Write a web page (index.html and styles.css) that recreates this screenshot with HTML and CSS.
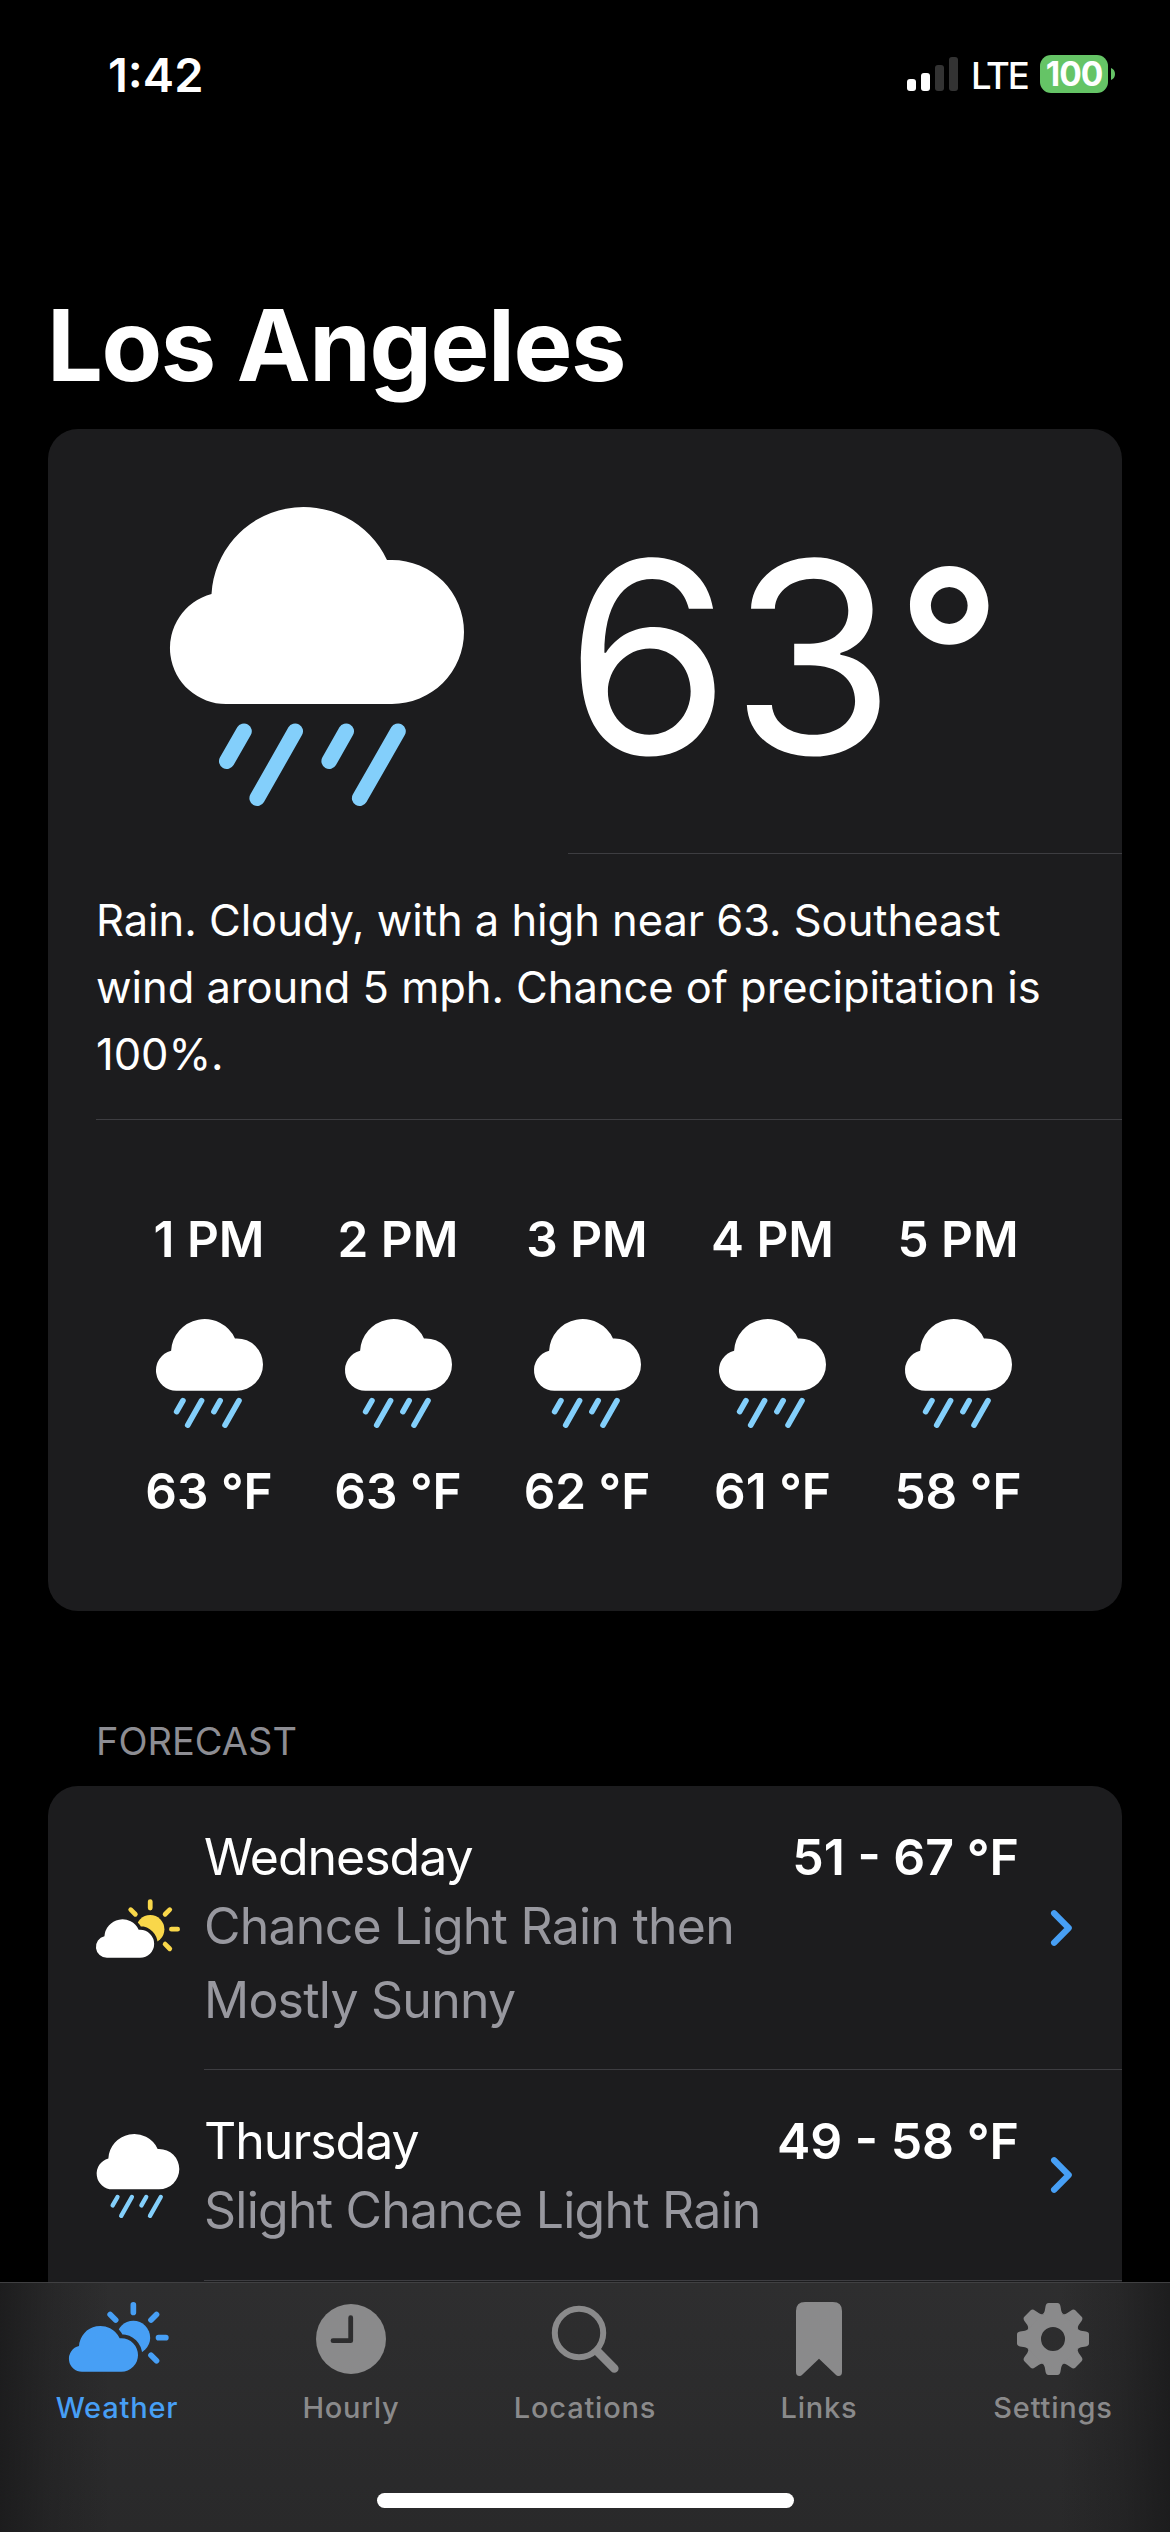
FILE: index.html
```html
<!DOCTYPE html>
<html lang="en">
<head>
<meta charset="utf-8">
<title>Los Angeles</title>
<link rel="stylesheet" href="styles.css">
</head>
<body>
<svg class="sprite" aria-hidden="true">
  <defs>
    <path id="cloud-shape" d="M246 306A39 39 0 0 1 237 229A64 64 0 0 1 359 206H364A50 50 0 0 1 364 306Z"/>
    <mask id="cloud-gap" maskUnits="userSpaceOnUse" x="200" y="90" width="320" height="230">
      <rect x="200" y="90" width="320" height="230" fill="#fff"/>
      <use href="#cloud-shape" fill="#000" stroke="#000" stroke-width="25"/>
    </mask>
    <mask id="clock-hands" maskUnits="userSpaceOnUse" x="0" y="0" width="70" height="70">
      <rect width="70" height="70" fill="#fff"/>
      <path d="M34.7 13.7V36.7H17" fill="none" stroke="#000" stroke-width="4.8" stroke-linecap="round" stroke-linejoin="round"/>
    </mask>
    <path id="tooth" d="M-11 -24.5Q-9 -25 -8.3 -28L-7.4 -33Q-6.8 -36 -4.5 -36H4.5Q6.8 -36 7.4 -33L8.3 -28Q9 -25 11 -24.5Z"/>
  </defs>
  <symbol id="rain" viewBox="170 507 294 299">
    <path fill="#fff" d="M226 704A56 56 0 0 1 211.5 593.9A92.2 92.2 0 0 1 387 560H392A72 72 0 0 1 392 704Z"/>
    <path fill="none" stroke="#83cffb" stroke-width="15.6" stroke-linecap="round" d="M244 731.2L226.8 761.2M295.2 731.2L257.2 798.2M346.2 731.2L329.2 761.2M398 731.2L359.7 798.2"/>
  </symbol>
  <symbol id="cloud-sun" viewBox="207 97 299 209">
    <use class="cloud" href="#cloud-shape"/>
    <circle class="sun" cx="400" cy="204" r="50.5" mask="url(#cloud-gap)"/>
    <path class="rays" d="M400 105.5V128.5M475.5 204H497.5M469.5 134.5L453 151M453 257L469.5 273.5M330.5 134.5L347 151"/>
  </symbol>
</svg>

<div class="screen">
  <main class="content">
    <header class="status">
      <span class="time">1:42</span>
      <div class="indicators">
        <div class="signal"><i class="bar b1"></i><i class="bar b2"></i><i class="bar b3"></i><i class="bar b4"></i></div>
        <span class="network">LTE</span>
        <div class="battery"><span class="level">100</span><svg class="nub" viewBox="0 0 4 12"><path d="M0 0Q4 1.5 4 6T0 12Z" fill="#65c466"/></svg></div>
      </div>
    </header>

    <h1 class="city">Los Angeles</h1>

    <section class="card current">
      <div class="now">
        <svg class="now-icon"><use href="#rain"/></svg>
        <div class="temperature"><span>63</span><span class="degree">°</span></div>
      </div>
      <p class="summary">Rain. Cloudy, with a high near 63. Southeast<br>wind around 5 mph. Chance of precipitation is<br>100%.</p>
      <div class="hours">
        <div class="hour"><span>1 PM</span><svg><use href="#rain"/></svg><span>63 °F</span></div>
        <div class="hour"><span>2 PM</span><svg><use href="#rain"/></svg><span>63 °F</span></div>
        <div class="hour"><span>3 PM</span><svg><use href="#rain"/></svg><span>62 °F</span></div>
        <div class="hour narrow"><span>4 PM</span><svg><use href="#rain"/></svg><span>61 °F</span></div>
        <div class="hour"><span>5 PM</span><svg><use href="#rain"/></svg><span>58 °F</span></div>
      </div>
    </section>

    <h2 class="section-title">FORECAST</h2>

    <section class="card forecast">
      <article class="day">
        <svg class="day-icon partly"><use href="#cloud-sun"/></svg>
        <div class="day-body tall">
          <div class="day-text">
            <div class="day-head"><span class="name">Wednesday</span><span class="range">51 - 67 °F</span></div>
            <p class="detail">Chance Light Rain then Mostly Sunny</p>
          </div>
          <svg class="chevron" viewBox="0 0 21 36"><path d="M3.1 3.3L17.7 18L3.1 32.7"/></svg>
        </div>
      </article>
      <article class="day">
        <svg class="day-icon"><use href="#rain"/></svg>
        <div class="day-body">
          <div class="day-text">
            <div class="day-head"><span class="name">Thursday</span><span class="range">49 - 58 °F</span></div>
            <p class="detail">Slight Chance Light Rain</p>
          </div>
          <svg class="chevron" viewBox="0 0 21 36"><path d="M3.1 3.3L17.7 18L3.1 32.7"/></svg>
        </div>
      </article>
    </section>
  </main>

  <nav class="tabs">
    <div class="tab-row">
      <a class="tab active">
        <span class="tab-icon"><svg class="weather-icon"><use href="#cloud-sun"/></svg></span>
        <span class="label">Weather</span>
      </a>
      <a class="tab">
        <span class="tab-icon"><svg width="70" height="70" viewBox="0 0 70 70"><circle cx="35" cy="35" r="35" mask="url(#clock-hands)"/></svg></span>
        <span class="label">Hourly</span>
      </a>
      <a class="tab">
        <span class="tab-icon"><svg width="68" height="68" viewBox="550 2305 68 68"><g fill="none" stroke="currentColor"><circle cx="578" cy="2333" r="24.2" stroke-width="6"/><path d="M596.5 2351.5L613.3 2368.5" stroke-width="8.6" stroke-linecap="round"/></g></svg></span>
        <span class="label">Locations</span>
      </a>
      <a class="tab">
        <span class="tab-icon"><svg width="46" height="74" viewBox="0 0 46 74"><path d="M0 9Q0 0 9 0H37Q46 0 46 9V70Q46 74 42.5 74Q41 74 39.5 72.5L23 56.8L6.5 72.5Q5 74 3.5 74Q0 74 0 70Z"/></svg></span>
        <span class="label">Links</span>
      </a>
      <a class="tab">
        <span class="tab-icon"><svg width="72" height="72" viewBox="-36 -36 72 72"><circle r="19.3" fill="none" stroke="currentColor" stroke-width="14.6"/><use href="#tooth"/><use href="#tooth" transform="rotate(45)"/><use href="#tooth" transform="rotate(90)"/><use href="#tooth" transform="rotate(135)"/><use href="#tooth" transform="rotate(180)"/><use href="#tooth" transform="rotate(225)"/><use href="#tooth" transform="rotate(270)"/><use href="#tooth" transform="rotate(315)"/></svg></span>
        <span class="label">Settings</span>
      </a>
    </div>
    <div class="home-bar"></div>
  </nav>
</div>
</body>
</html>
```
FILE: styles.css
```css
* { box-sizing: border-box; margin: 0; padding: 0; }
body { background: #000; color: #fff; font-family: Inter, "Liberation Sans", sans-serif; white-space: nowrap; }
svg { display: block; flex: none; overflow: visible; }
symbol { overflow: visible; }
.sprite { position: absolute; width: 0; height: 0; overflow: hidden; }
.screen { --cloud: #fff; --sun: #f9d74a; width: 1170px; height: 2532px; display: flex; flex-direction: column; overflow: hidden; }
.content { height: 2282px; overflow: hidden; flex: none; }

.status { height: 148px; padding: 0 55px 0 108px; display: flex; justify-content: space-between; align-items: center; }
.time { font-size: 47px; font-weight: 600; letter-spacing: 0; }
.indicators { display: flex; align-items: center; }
.signal { display: flex; align-items: flex-end; gap: 5px; height: 34px; }
.bar { width: 9px; border-radius: 3px; background: #fff; }
.b1 { height: 12px; }
.b2 { height: 18px; }
.b3 { height: 26px; background: #333; }
.b4 { height: 34px; background: #333; }
.network { width: 82px; padding: 4px 0 0 13px; font-size: 36.5px; line-height: 40px; font-weight: 500; letter-spacing: -2.2px; }
.battery { display: flex; align-items: center; gap: 3px; }
.level { width: 68px; height: 38px; border-radius: 11px; background: #65c466; font-size: 33.5px; line-height: 38px; font-weight: 700; text-align: center; letter-spacing: -1px; }
.nub { width: 4px; height: 12px; }

.city { margin-top: 137px; height: 144px; padding-left: 47px; font-size: 99px; line-height: 120px; font-weight: 700; letter-spacing: -1.45px; }

.card { width: 1074px; margin: 0 48px; border-radius: 30px; background: #1c1c1e; }
.current { height: 1182px; }
.now { height: 424px; padding-left: 122px; display: flex; align-items: flex-start; }
.now-icon { width: 294px; height: 299px; margin-top: 78px; }
.temperature { margin-left: 104px; height: 425px; flex: 1; border-bottom: 1px solid #3d3d41; display: flex; font-size: 267px; line-height: 456px; letter-spacing: 0; text-indent: -3px; }
.degree { font-size: 230px; line-height: 445px; font-weight: 600; text-indent: 1px; }
.summary { margin-left: 48px; padding-top: 34px; height: 267px; border-bottom: 1px solid #3d3d41; font-size: 43.5px; line-height: 67px; letter-spacing: -0.05px; }
.hours { padding: 87px 0 0 98px; display: flex; gap: 63px; font-size: 49.5px; line-height: 64px; font-weight: 600; }
.hour { width: 126px; display: flex; flex-direction: column; align-items: center; }
.hour svg { width: 107px; height: 109px; margin: 48px 0 31px; }
.narrow { width: 119px; }

.section-title { margin: 103px 0 0 96px; height: 72px; font-size: 38px; line-height: 54px; font-weight: 400; color: #8d8d93; }

.forecast { padding-left: 48px; height: 600px; }
.day { display: flex; align-items: center; }
.day-icon { width: 84px; height: 84px; margin-right: 24px; }
.partly { height: 59px; }
.day-body { flex: 1; height: 211px; padding-right: 50px; border-bottom: 1px solid #3d3d41; display: flex; justify-content: space-between; align-items: center; font-size: 50px; }
.day-body.tall { height: 284px; }
.day-text { width: 815px; align-self: flex-start; padding-top: 39px; }
.day-head { display: flex; justify-content: space-between; line-height: 64px; }
.name { letter-spacing: -1px; }
.range { font-weight: 600; }
.detail { width: 600px; white-space: normal; line-height: 74px; letter-spacing: -0.77px; color: #98989f; }
.chevron { width: 21px; height: 36px; }
.chevron path { fill: none; stroke: #479ff5; stroke-width: 6.2; stroke-linecap: round; stroke-linejoin: round; }
.cloud { fill: var(--cloud); }
.sun { fill: var(--sun); }
.rays { fill: none; stroke: var(--sun); stroke-width: 17; stroke-linecap: round; }

.tabs { height: 250px; flex: none; border-top: 1px solid #404042; display: flex; flex-direction: column; align-items: center; background: linear-gradient(90deg, rgba(26,26,27,.85) 0, rgba(26,26,27,.35) 50px, rgba(26,26,27,0) 110px, rgba(26,26,27,0) 1060px, rgba(26,26,27,.35) 1120px, rgba(26,26,27,.85) 100%), linear-gradient(#2e2e2f, #29292a); }
.tab-row { width: 1170px; height: 210px; display: flex; color: #8a8a8b; }
.tab { width: 234px; display: flex; flex-direction: column; align-items: center; fill: currentColor; }
.tab-icon { height: 112px; display: flex; align-items: center; justify-content: center; }
.weather-icon { width: 99.7px; height: 69.7px; margin: -4px 0 0 4px; }
.label { font-size: 29px; line-height: 25px; font-weight: 500; letter-spacing: 0.8px; }
.active { color: #479ff5; --cloud: #479ff5; --sun: #479ff5; }
.home-bar { width: 417px; height: 15px; border-radius: 8px; background: #fff; }
```
